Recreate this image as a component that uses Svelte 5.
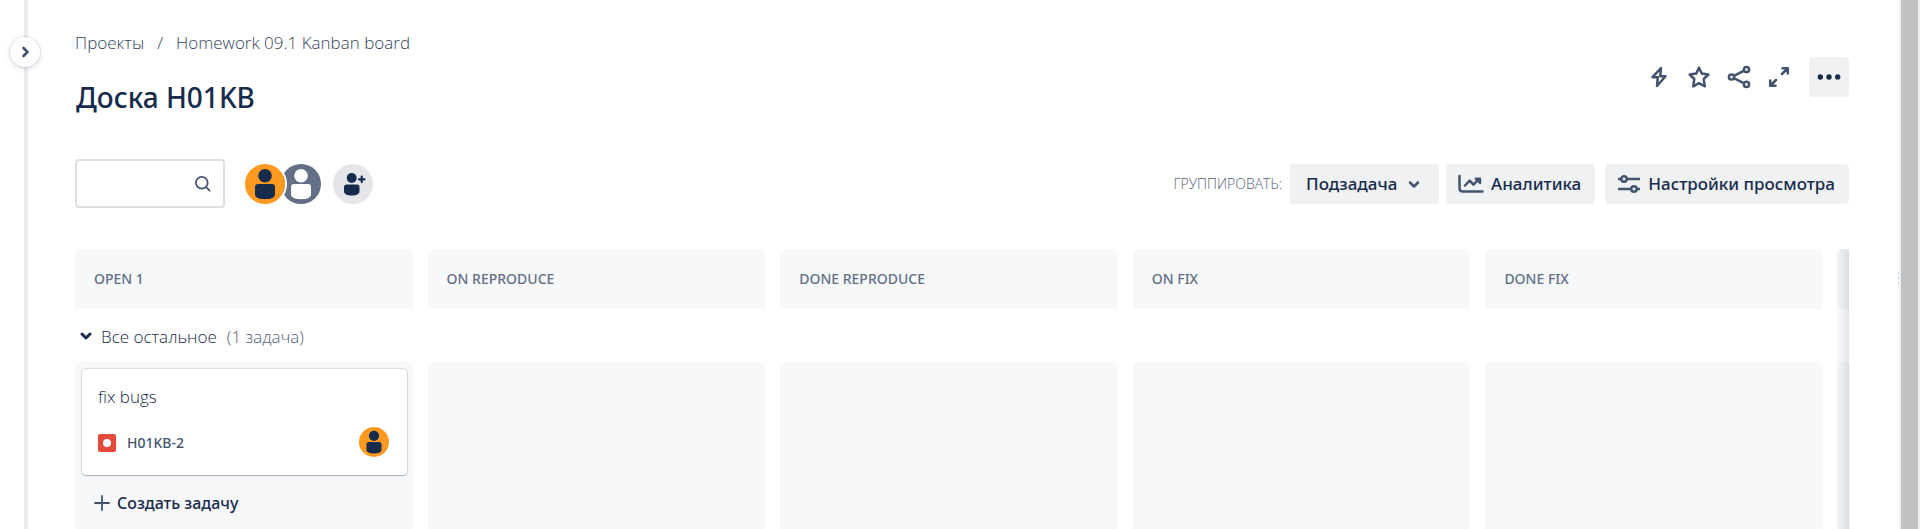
<script>
  const columns = ['OPEN 1', 'ON REPRODUCE', 'DONE REPRODUCE', 'ON FIX', 'DONE FIX'];
  let query = $state('');
  let grouping = $state('subtask');
  let expanded = $state(true);
</script>

{#snippet person(size, tone)}
  <svg class="avatar {tone}" width={size} height={size} viewBox="0 0 40 40" aria-hidden="true">
    <circle class="disc" cx="20" cy="20" r="20" />
    <circle class="figure" cx="20" cy="11.7" r="6.8" />
    <path class="figure" d="M10 23a3 3 0 0 1 3-3h14a3 3 0 0 1 3 3v7.500c0 3-4 4.700-10 4.700s-10-1.700-10-4.700z" />
  </svg>
{/snippet}

<div class="app">
  <aside class="rail">
    <button class="expand" aria-label="Развернуть боковую панель">
      <svg width="30" height="30" viewBox="0 0 30 30"><path d="M13.500 11l4 4-4 4" fill="none" stroke="currentColor" stroke-width="2.700" stroke-linecap="round" stroke-linejoin="round" /></svg>
    </button>
  </aside>

  <main>
    <nav class="crumbs" aria-label="Навигация">
      <a href="#projects">Проекты</a><span>/</span><a href="#board">Homework 09.1 Kanban board</a>
    </nav>

    <header class="heading">
      <h1>Доска H01KB</h1>
      <div class="actions">
        <button aria-label="Автоматизация">
          <svg width="30" height="30" viewBox="0 0 30 30" fill="none" stroke="currentColor" stroke-width="2.500" stroke-linejoin="round"><path d="M17 6L8.500 15.200h5.300l-.800 8.800 8.500-9.700h-5.300z" /></svg>
        </button>
        <button aria-label="В избранное">
          <svg width="30" height="30" viewBox="0 0 30 30" fill="none" stroke="currentColor" stroke-width="2.500" stroke-linejoin="round"><path d="M15 5.700l2.800 5.900 6.600.900-4.700 4.500 1.100 7.300L15 21.200l-5.800 3.100 1.100-7.300-4.700-4.500 6.600-.900z" /></svg>
        </button>
        <button aria-label="Поделиться">
          <svg width="30" height="30" viewBox="0 0 30 30" fill="none" stroke="currentColor" stroke-width="2.500"><circle cx="7.500" cy="15" r="2.600" /><circle cx="22.500" cy="7.600" r="2.600" /><circle cx="22.500" cy="22.400" r="2.600" /><path d="M9.800 13.900l10.400-5.200M9.800 16.100l10.400 5.200" /></svg>
        </button>
        <button aria-label="На весь экран">
          <svg width="30" height="30" viewBox="0 0 30 30" fill="none" stroke="currentColor" stroke-width="2.500" stroke-linecap="round" stroke-linejoin="round"><path d="M18 12l5.500-5.500M18.500 6.300h5.300v5.300M12 18l-5.500 5.500M6.200 18.400v5.300h5.300" /></svg>
        </button>
        <button class="more" aria-label="Ещё">
          <svg width="30" height="30" viewBox="0 0 30 30" fill="currentColor"><circle cx="6.300" cy="15" r="2.700" /><circle cx="15" cy="15" r="2.700" /><circle cx="23.700" cy="15" r="2.700" /></svg>
        </button>
      </div>
    </header>

    <div class="toolbar">
      <label class="search">
        <input type="text" aria-label="Поиск на доске" bind:value={query} />
        <svg width="20" height="20" viewBox="0 0 20 20" fill="none" stroke="currentColor" stroke-width="1.800" stroke-linecap="round"><circle cx="8.800" cy="8.800" r="5.900" /><path d="M13.200 13.200l3.500 3.500" /></svg>
      </label>
      <div class="people">
        <button class="lead" aria-label="Участник">{@render person(40, 'orange')}</button>
        <button aria-label="Не назначено">{@render person(40, 'slate')}</button>
      </div>
      <button class="invite" aria-label="Добавить людей">
        <svg width="40" height="40" viewBox="0 0 40 40" fill="currentColor"><circle cx="18.700" cy="14" r="5" /><path d="M11 23a2.500 2.500 0 0 1 2.500-2.500h10.500a2.500 2.500 0 0 1 2.500 2.500v4.500c0 2.500-3.300 4-7.700 4s-7.800-1.500-7.800-4z" /><path d="M28.700 12.500v5.600M25.900 15.300h5.600" fill="none" stroke="currentColor" stroke-width="2.200" stroke-linecap="round" /></svg>
      </button>

      <div class="filters">
        <label class="group-label" for="grouping">ГРУППИРОВАТЬ:</label>
        <div class="picker">
          <select id="grouping" bind:value={grouping}>
            <option value="subtask">Подзадача</option>
          </select>
          <svg width="20" height="20" viewBox="0 0 20 20"><path d="M6 8.500l4 4 4-4" fill="none" stroke="#44546f" stroke-width="2.500" stroke-linecap="round" stroke-linejoin="round" /></svg>
        </div>
        <button class="tool">
          <svg width="26" height="20" viewBox="0 0 26 20" fill="none" stroke="currentColor" stroke-width="2.500" stroke-linecap="round" stroke-linejoin="round"><path d="M1.500 2v12.500a3 3 0 0 0 3 3h20" /><path d="M7 11.500l4.700-4.800 3.800 4 5-5.200" /><path d="M17.500 4.500h4.700v4.700z" fill="currentColor" stroke-width="2" /></svg>
          Аналитика
        </button>
        <button class="tool settings">
          <svg width="24" height="20" viewBox="0 0 24 20" fill="none" stroke="currentColor" stroke-width="2.500"><circle cx="7" cy="5" r="2.700" /><circle cx="17" cy="15" r="2.700" /><path d="M1 5h3.300M9.700 5H23M1 15h13.300M19.700 15H23" /></svg>
          Настройки просмотра
        </button>
      </div>
    </div>

    <section class="board" aria-label="Доска">
      <div class="grid">
        {#each columns as name}
          <h2>{name}</h2>
        {/each}
        <div class="head-rest"></div>
      </div>

      <button class="lane" aria-expanded={expanded} onclick={() => (expanded = !expanded)}>
        <svg width="12" height="12" viewBox="0 0 12 12"><path d="M2 3l4 4 4-4" fill="none" stroke="currentColor" stroke-width="3" stroke-linecap="round" stroke-linejoin="round" /></svg>
        <span>Все остальное</span><span class="count">(1 задача)</span>
      </button>

      {#if expanded}
        <div class="grid cells">
          {#each columns as name, i}
            <div class="cell">
              {#if i === 0}
                <article class="card">
                  <p>fix bugs</p>
                  <div class="meta">
                    <svg width="18" height="18" viewBox="0 0 18 18" aria-hidden="true"><rect width="18" height="18" rx="2" fill="#e5493a" /><circle cx="9" cy="9" r="4" fill="#fff" /></svg>
                    <a href="#H01KB-2">H01KB-2</a>
                    {@render person(30, 'orange')}
                  </div>
                </article>
                <button class="create">
                  <svg width="16" height="16" viewBox="0 0 16 16"><path d="M8 1v14M1 8h14" stroke="#44546f" stroke-width="1.800" stroke-linecap="round" /></svg>
                  Создать задачу
                </button>
              {/if}
            </div>
          {/each}
          <div class="cell"></div>
        </div>
      {/if}
      <div class="fade"></div>
    </section>
  </main>

  <div class="gutter"><div class="ticks"></div></div>
  <div class="scrollbar"></div>
</div>

<style>
  :global(body) {
    margin: 0;
    background: #fff;
  }
  .app {
    display: flex;
    height: 100vh;
    overflow: hidden;
    color: #172b4d;
    font: 300 17px/24px 'Segoe UI', 'Open Sans', 'Noto Sans', sans-serif;
  }
  .app * {
    box-sizing: border-box;
  }
  button,
  select,
  input {
    font: inherit;
    color: inherit;
    border: 0;
    margin: 0;
    padding: 0;
    background: none;
  }
  button,
  select {
    cursor: pointer;
  }
  svg {
    display: block;
    flex: none;
  }
  a {
    color: inherit;
    text-decoration: none;
  }
  .rail {
    position: relative;
    flex: none;
    width: 28px;
    border-right: 4px solid #ebecf0;
  }
  .expand {
    position: absolute;
    top: 37px;
    left: 10px;
    width: 30px;
    height: 30px;
    border-radius: 50%;
    background: #fff;
    color: #42526e;
    box-shadow: 0 0 0 1px rgba(9, 30, 66, 0.08), 0 2px 5px 1px rgba(9, 30, 66, 0.1);
  }
  main {
    display: flex;
    flex: 1;
    flex-direction: column;
    min-width: 0;
    padding: 31px 0 0 47px;
  }
  .crumbs {
    display: flex;
    gap: 13px;
    color: #34435e;
  }
  .heading {
    display: flex;
    justify-content: space-between;
    height: 104px;
    padding-top: 2px;
  }
  h1,
  h2,
  .filters,
  .meta,
  .create {
    font-family: 'Segoe UI', 'Noto Sans', 'Open Sans', sans-serif;
    font-weight: 500;
  }
  h1 {
    margin: 0;
    padding: 20px 0 0 1px;
    font-size: 28px;
    line-height: 40px;
  }
  .actions {
    display: flex;
    gap: 10px;
    height: 40px;
    color: #44546f;
  }
  .actions button {
    display: grid;
    place-items: center;
    width: 30px;
    height: 40px;
  }
  .actions .more {
    width: 40px;
    margin-left: 5px;
    border-radius: 4px;
    background: #f0f1f3;
    color: #172b4d;
  }
  .toolbar {
    display: flex;
    align-items: center;
    height: 49px;
  }
  .search {
    display: flex;
    align-items: center;
    width: 150px;
    height: 49px;
    padding: 0 10px;
    border: 2px solid #dcdfe4;
    border-radius: 4px;
    color: #44546f;
  }
  .search input {
    flex: 1;
    min-width: 0;
    outline: 0;
  }
  .people {
    display: flex;
    margin-left: 20px;
  }
  .people button {
    border-radius: 50%;
  }
  .people .lead {
    z-index: 1;
    margin-right: -4px;
    box-shadow: 0 0 0 2px #fff;
  }
  .orange .disc {
    fill: #ff991f;
  }
  .orange .figure {
    fill: #172b4d;
  }
  .slate .disc {
    fill: #626f86;
  }
  .slate .figure {
    fill: #fff;
  }
  .invite {
    margin-left: 12px;
    border-radius: 50%;
    background: #e4e6ea;
  }
  .filters {
    display: flex;
    align-items: center;
    margin-left: auto;
  }
  .group-label {
    margin-right: 8px;
    color: #55627a;
    font-family: 'Segoe UI', 'Open Sans', sans-serif;
    font-size: 14px;
    font-weight: 300;
  }
  .picker {
    display: grid;
    align-items: center;
    width: 149px;
    height: 40px;
    border-radius: 4px;
    background: #f0f1f3;
  }
  .picker > * {
    grid-area: 1 / 1;
  }
  .picker select {
    width: 100%;
    height: 40px;
    padding-left: 16px;
    appearance: none;
  }
  .picker svg {
    justify-self: end;
    margin-right: 15px;
    pointer-events: none;
  }
  .tool {
    display: flex;
    align-items: center;
    gap: 7px;
    height: 40px;
    margin-left: 7px;
    padding: 0 14px 0 12px;
    border-radius: 4px;
    background: #f0f1f3;
    white-space: nowrap;
  }
  .tool svg {
    color: #44546f;
  }
  .settings {
    margin-left: 10px;
  }
  .board {
    position: relative;
    display: flex;
    flex: 1;
    flex-direction: column;
    min-height: 0;
    margin-top: 41px;
  }
  .grid {
    display: grid;
    flex: none;
    grid-template-columns: repeat(5, minmax(0, 1fr)) 11px;
    gap: 15px;
  }
  h2,
  .head-rest {
    margin: 0;
    border-radius: 6px 6px 0 0;
    background: #f7f8f9;
  }
  h2 {
    padding: 18px 19px;
    color: #626f86;
    font-size: 14px;
    line-height: 24px;
  }
  .lane {
    display: flex;
    flex: none;
    align-items: center;
    height: 53px;
    padding: 2px 0 0 5px;
    text-align: left;
  }
  .lane span {
    margin-left: 9px;
  }
  .lane .count {
    margin-left: 10px;
    color: #55627a;
  }
  .cells {
    flex: 1;
  }
  .cell {
    padding: 7px 6px 7px 7px;
    border-radius: 6px 6px 0 0;
    background: #f7f8f9;
  }
  .card {
    padding: 16px;
    border-radius: 4px;
    background: #fff;
    box-shadow: 0 1px 1px rgba(9, 30, 66, 0.25), 0 0 1px 1px rgba(9, 30, 66, 0.12);
  }
  .card p {
    margin: 0 0 18px;
  }
  .meta {
    display: flex;
    align-items: center;
    color: #44546f;
    font-size: 14px;
  }
  .meta a {
    margin-left: 11px;
  }
  .meta .avatar {
    margin: 0 2px 2px auto;
  }
  .create {
    display: flex;
    align-items: center;
    gap: 7px;
    margin-top: 8px;
    padding: 8px 12px;
    font-size: 16px;
  }
  .fade {
    position: absolute;
    top: 0;
    right: 0;
    bottom: 0;
    width: 14px;
    background: linear-gradient(to right, rgba(9, 30, 66, 0), rgba(9, 30, 66, 0.12));
    pointer-events: none;
  }
  .gutter {
    flex: none;
    width: 50px;
    padding-top: 272px;
  }
  .ticks {
    width: 1px;
    height: 13px;
    margin-left: auto;
    background: repeating-linear-gradient(#b3dbf7 0 2px, transparent 2px 5px);
  }
  .scrollbar {
    flex: none;
    width: 21px;
    border: solid #f1f1f1;
    border-width: 0 2px;
    background: #c1c1c1;
  }
</style>
